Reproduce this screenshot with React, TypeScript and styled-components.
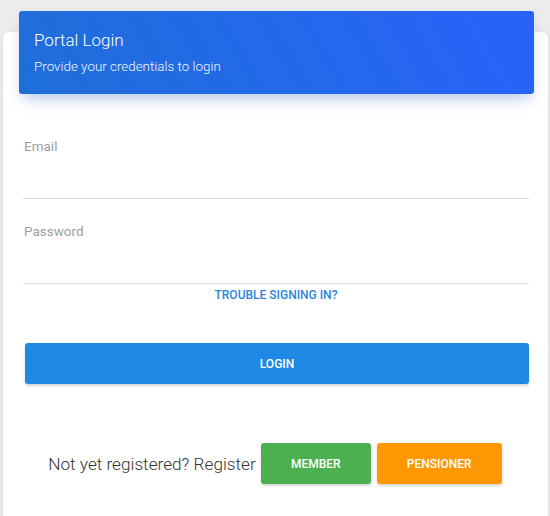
import React from "react";
import styled, { createGlobalStyle } from "styled-components";

const Global = createGlobalStyle`
  html, body { margin: 0; padding: 0; background: #ececec; }
  body { font-family: Roboto, "Noto Sans", sans-serif; }
  * { box-sizing: border-box; }
`;

const Page = styled.div`
  padding: 32px 2px 0 3px;
  width: 550px;
  height: 516px;
  overflow: hidden;
`;

const Card = styled.div`
  display: flow-root;
  background: #fff;
  border-radius: 6px;
  box-shadow: 0 1px 4px rgba(0,0,0,0.08);
  padding: 0 19px 40px 20px;
  min-height: 520px;
`;

const Header = styled.div`
  margin: -21px -5px 0 -4px;
  height: 83px;
  border-radius: 3px;
  background: linear-gradient(60deg, #1e6fd8, #2962fb);
  box-shadow: 0 8px 14px -4px rgba(30, 90, 200, 0.35);
  color: #fff;
  padding: 18px 15px 0 15px;
`;

const Title = styled.div`
  font-size: 17px;
  font-weight: 300;
  line-height: 22px;
`;

const Subtitle = styled.div`
  font-size: 13.4px;
  font-weight: 300;
  line-height: 18px;
  margin-top: 7px;
  opacity: 0.95;
`;

const Form = styled.div`
  padding-top: 42px;
  display: flex;
  flex-direction: column;
`;

const Field = styled.div<{ $gap?: number }>`
  margin-top: ${(p) => p.$gap ?? 0}px;
  border-bottom: 1px solid #dcdcdc;
`;

const Label = styled.div`
  font-size: 13.5px;
  line-height: 20px;
  color: #9e9e9e;
  padding-left: 1px;
`;

const Input = styled.input`
  display: block;
  width: 100%;
  height: 42px;
  border: none;
  outline: none;
  background: transparent;
  font-family: inherit;
  font-size: 14px;
`;

const LinkText = styled.a`
  align-self: center;
  margin-top: 4px;
  font-size: 12px;
  font-weight: 500;
  line-height: 14px;
  color: #2a86da;
  text-decoration: none;
`;

const Button = styled.button<{ $bg: string }>`
  border: none;
  border-radius: 3px;
  background: ${(p) => p.$bg};
  color: #fff;
  font-family: Roboto, sans-serif;
  font-size: 12px;
  font-weight: 500;
  height: 41px;
  box-shadow: 0 2px 3px rgba(0,0,0,0.16);
  cursor: pointer;
`;

const LoginButton = styled(Button)`
  margin: 41px 0 0 2px;
`;

const RegisterRow = styled.div`
  margin-top: 59px;
  display: flex;
  align-items: center;
  justify-content: center;
  gap: 6px;
  padding-right: 2px;
`;

const RegisterText = styled.span`
  font-size: 17.2px;
  font-weight: 300;
  color: #333;
  margin-right: -1px;
`;

const SmallButton = styled(Button)<{ $w: number }>`
  width: ${(p) => p.$w}px;
`;

export default function App() {
  return (
    <>
      <Global />
      <Page>
        <Card>
          <Header>
            <Title>Portal Login</Title>
            <Subtitle>Provide your credentials to login</Subtitle>
          </Header>
          <Form>
            <Field>
              <Label>Email</Label>
              <Input type="email" />
            </Field>
            <Field $gap={22}>
              <Label>Password</Label>
              <Input type="password" />
            </Field>
            <LinkText href="#">TROUBLE SIGNING IN?</LinkText>
            <LoginButton $bg="#1e88e5">LOGIN</LoginButton>
            <RegisterRow>
              <RegisterText>Not yet registered? Register</RegisterText>
              <SmallButton $bg="#4caf50" $w={110}>MEMBER</SmallButton>
              <SmallButton $bg="#ff9800" $w={125}>PENSIONER</SmallButton>
            </RegisterRow>
          </Form>
        </Card>
      </Page>
    </>
  );
}
